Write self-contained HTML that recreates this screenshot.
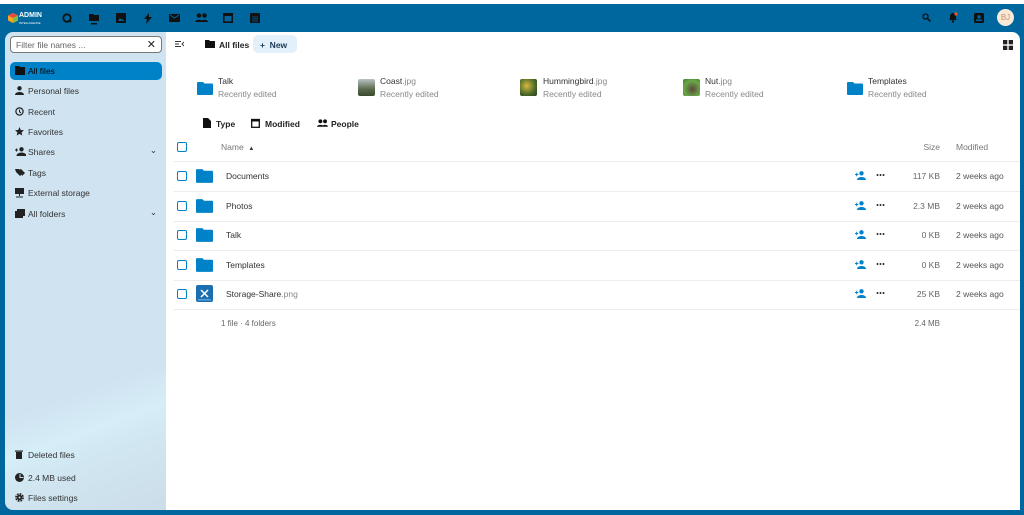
<!DOCTYPE html>
<html><head><meta charset="utf-8"><style>
*{box-sizing:border-box;margin:0;padding:0}
html,body{overflow:hidden}
body{width:1024px;height:515px;background:#00679e;font-family:"Liberation Sans",sans-serif;font-size:9px;color:#222;position:relative}
.top{position:absolute;left:0;top:0;width:1024px;height:4px;background:#fff}
.hdr{position:absolute;top:4px;left:0;width:1024px;height:28px;background:#00679e}
.side{position:absolute;left:5px;top:32px;width:161px;height:478px;border-radius:8px 0 0 8px;background:linear-gradient(160deg,#cfe3f0 0%,#cfe3f0 72%,#d6eef8 80%,#d0e6f1 86%,#cbdde8 100%)}
.main{position:absolute;left:166px;top:32px;width:854px;height:478px;background:#fff;border-radius:0 8px 0 0}
.abs{position:absolute}
.filter{position:absolute;left:5px;top:4px;width:152px;height:17px;background:#fff;border:1px solid #777;border-radius:4px;color:#666;font-size:8.5px;padding:3px 5px}
.nav{position:absolute;left:5px;width:152px;height:18px;border-radius:5px;font-size:8.5px;color:#333;padding:4px 0 0 18px}
.nav.act{background:#0082c9;color:#000}
.nav i{position:absolute;left:5px;top:4px;width:9px;height:9px}
.row{position:absolute;left:8px;width:846px;height:30px;border-bottom:1px solid #ededed;font-size:8.5px;color:#333}
.cb{position:absolute;left:3px;top:9px;width:10px;height:10px;border:1.5px solid #0082c9;border-radius:2px;background:#fff}
.fold{position:absolute;left:22px;top:7px}
.nm{position:absolute;left:52px;top:9px}
.sz{position:absolute;right:80px;top:9px;color:#666}
.md{position:absolute;left:782px;top:9px;color:#555}
.sh{position:absolute;left:681px;top:9px}
.dots{position:absolute;left:702px;top:12px;width:9px;height:2px;background:radial-gradient(circle,#333 0.9px,transparent 1.1px) 0 0/3px 2px repeat-x}
.rec{position:absolute;top:44px;font-size:8.5px;color:#333}
.rec .s{color:#888;margin-top:3px}
.g{color:#888}
</style></head><body>
<div class="top"></div>
<div class="hdr">
 <svg class="abs" style="left:8px;top:9px" width="10" height="10" viewBox="0 0 10 10"><polygon points="5,0 10,2.5 10,7.5 5,10 0,7.5 0,2.5" fill="#f5a623"/><polygon points="5,0 10,2.5 5,5 0,2.5" fill="#e94e3c"/><polygon points="5,5 10,2.5 10,7.5 5,10" fill="#7ac143"/></svg>
 <div class="abs" style="left:19px;top:8px;color:#fff;font-weight:bold;font-size:7px;line-height:7px">ADMIN<br><span style="font-size:3px;font-weight:normal">INTELLIGENCE</span></div>
 <svg class="abs" style="left:62px;top:9px" width="10" height="10" viewBox="0 0 10 10"><circle cx="5" cy="5" r="3.7" fill="none" stroke="#111" stroke-width="1.8"/><path d="M7 7l2 2" stroke="#111" stroke-width="1.8"/></svg>
 <svg class="abs" style="left:89px;top:9px" width="10" height="12" viewBox="0 0 10 12"><path d="M0 1h4l1 1h5v6H0z" fill="#111"/><rect x="2" y="10" width="6" height="1.5" fill="#111"/></svg>
 <svg class="abs" style="left:116px;top:9px" width="10" height="10" viewBox="0 0 10 10"><rect width="10" height="10" rx="1" fill="#111"/><path d="M2 8l2-3 2 2 1-1 1 2z" fill="#00679e"/></svg>
 <svg class="abs" style="left:144px;top:9px" width="8" height="11" viewBox="0 0 8 11"><path d="M5 0L0 6h3l-1 5 6-7H5z" fill="#111"/></svg>
 <svg class="abs" style="left:169px;top:10px" width="11" height="8" viewBox="0 0 11 8"><rect width="11" height="8" rx="1" fill="#111"/><path d="M1 1l4.5 3L10 1" stroke="#00679e" fill="none"/></svg>
 <svg class="abs" style="left:195px;top:9px" width="13" height="9" viewBox="0 0 13 9"><circle cx="4" cy="2.5" r="2.3" fill="#111"/><circle cx="9.5" cy="2.5" r="2.3" fill="#111"/><path d="M0 9c0-3 8-3 8 0zM6 9c0-3 7-3 7 0z" fill="#111"/></svg>
 <svg class="abs" style="left:223px;top:8px" width="10" height="11" viewBox="0 0 10 11"><rect x="0.8" y="1.8" width="8.4" height="8.4" fill="none" stroke="#111" stroke-width="1.6"/><rect x="0" y="1" width="10" height="3" fill="#111"/></svg>
 <svg class="abs" style="left:250px;top:8px" width="10" height="11" viewBox="0 0 10 11"><rect x="0" y="1" width="10" height="10" rx="1" fill="#111"/><path d="M2 5h6M2 7h6M2 9h6" stroke="#00679e" stroke-width="0.8"/></svg>
 <svg class="abs" style="left:922px;top:9px" width="9" height="9" viewBox="0 0 9 9"><circle cx="3.5" cy="3.5" r="2.5" fill="none" stroke="#111" stroke-width="1.3"/><path d="M5.5 5.5L8.5 8.5" stroke="#111" stroke-width="1.5"/></svg>
 <svg class="abs" style="left:948px;top:8px" width="10" height="11" viewBox="0 0 10 11"><path d="M1 8h8L8 7V4a3 3 0 0 0-6 0v3z" fill="#111"/><circle cx="5" cy="9.5" r="1.2" fill="#111"/><circle cx="8" cy="2" r="1.6" fill="#e9562a"/></svg>
 <svg class="abs" style="left:974px;top:9px" width="10" height="10" viewBox="0 0 10 10"><rect width="10" height="10" rx="1.5" fill="#111"/><circle cx="5" cy="4" r="1.7" fill="#00679e"/><rect x="2" y="6.5" width="6" height="1.5" fill="#00679e"/></svg>
 <div class="abs" style="left:997px;top:5px;width:17px;height:17px;border-radius:50%;background:#fbe9d8;color:#c8906a;font-size:8px;text-align:center;line-height:17px">BJ</div>
</div>
<div class="side">
 <div class="filter">Filter file names ...<span style="position:absolute;right:5px;top:1px;font-size:11px;color:#222">✕</span></div>
 <div class="nav act" style="top:30px"><i><svg width="10" height="9" viewBox="0 0 10 9"><path d="M0 0h4l1 1h5v8H0z" fill="#111"/></svg></i>All files</div>
 <div class="nav" style="top:50px"><i><svg width="9" height="9" viewBox="0 0 9 9"><circle cx="4.5" cy="2.3" r="2.2" fill="#222"/><path d="M0 9c0-4 9-4 9 0z" fill="#222"/></svg></i>Personal files</div>
 <div class="nav" style="top:71px"><i><svg width="9" height="9" viewBox="0 0 9 9"><circle cx="4.5" cy="4.5" r="3.6" fill="none" stroke="#222" stroke-width="1.2"/><path d="M4.5 2.5v2.3l1.5 1" stroke="#222" fill="none"/></svg></i>Recent</div>
 <div class="nav" style="top:91px"><i><svg width="9" height="9" viewBox="0 0 10 10"><path d="M5 0l1.4 3.3 3.6.3-2.7 2.4.8 3.5L5 7.7 1.9 9.5l.8-3.5L0 3.6l3.6-.3z" fill="#222"/></svg></i>Favorites</div>
 <div class="nav" style="top:111px"><i><svg width="11" height="9" viewBox="0 0 11 9"><circle cx="6.5" cy="2.3" r="2.2" fill="#222"/><path d="M2 9c0-4 9-4 9 0zM0 3h3M1.5 1.5v3" fill="#222" stroke="#222"/></svg></i>Shares<span style="position:absolute;right:5px;top:2px">⌄</span></div>
 <div class="nav" style="top:132px"><i><svg width="10" height="9" viewBox="0 0 10 9"><path d="M0 1h4l4 4-3 3-4-4zM5 1h1l4 4-3 3" fill="#222"/></svg></i>Tags</div>
 <div class="nav" style="top:152px"><i><svg width="9" height="10" viewBox="0 0 9 10"><rect width="9" height="6" fill="#222"/><path d="M4.5 6v2M1 9h7" stroke="#222"/></svg></i>External storage</div>
 <div class="nav" style="top:173px"><i><svg width="10" height="9" viewBox="0 0 10 9"><rect x="0" y="2" width="8" height="7" fill="#222"/><rect x="2" y="0" width="8" height="7" fill="#222"/></svg></i>All folders<span style="position:absolute;right:5px;top:2px">⌄</span></div>
 <div class="nav" style="top:414px"><i><svg width="8" height="9" viewBox="0 0 8 9"><rect x="1" y="2" width="6" height="7" fill="#222"/><rect x="0" y="0.5" width="8" height="1.2" fill="#222"/></svg></i>Deleted files</div>
 <div class="nav" style="top:437px"><i><svg width="9" height="9" viewBox="0 0 9 9"><circle cx="4.5" cy="4.5" r="4.5" fill="#222"/><path d="M5 1v3.5h3.5" stroke="#cbdde8" fill="none"/></svg></i>2.4 MB used</div>
 <div class="nav" style="top:457px"><i><svg width="9" height="9" viewBox="0 0 9 9"><circle cx="4.5" cy="4.5" r="3.3" fill="none" stroke="#222" stroke-width="2.2" stroke-dasharray="1.6 1"/><circle cx="4.5" cy="4.5" r="2.6" fill="#222"/><circle cx="4.5" cy="4.5" r="1" fill="#cbdde8"/></svg></i>Files settings</div>
</div>
<div class="main">
 <svg class="abs" style="left:9px;top:9px" width="9" height="6" viewBox="0 0 9 6"><path d="M0 .5h6M0 3h4M0 5.5h6M9 1L7 3l2 2" stroke="#333" fill="none" stroke-width=".9"/></svg>
 <svg class="abs" style="left:39px;top:8px" width="10" height="8" viewBox="0 0 10 8"><path d="M0 0h4l1 1h5v7H0z" fill="#111"/></svg>
 <div class="abs" style="left:53px;top:8px;font-weight:bold;font-size:8.5px">All files</div>
 <div class="abs" style="left:87px;top:3px;width:44px;height:18px;background:#e3f0f9;border-radius:5px;font-weight:bold;font-size:8.5px;color:#1a3a55;padding:5px 0 0 7px">+&nbsp; New</div>
 <svg class="abs" style="left:837px;top:8px" width="10" height="10" viewBox="0 0 10 10"><rect width="4.3" height="4.3" fill="#222"/><rect x="5.7" width="4.3" height="4.3" fill="#222"/><rect y="5.7" width="4.3" height="4.3" fill="#222"/><rect x="5.7" y="5.7" width="4.3" height="4.3" fill="#222"/></svg>

 <svg class="abs" style="left:31px;top:50px" width="16" height="13" viewBox="0 0 16 13"><path d="M0 1a1 1 0 0 1 1-1h5l1.5 1.5H15a1 1 0 0 1 1 1V12a1 1 0 0 1-1 1H1a1 1 0 0 1-1-1z" fill="#0082c9"/></svg>
 <div class="rec" style="left:52px">Talk<div class="s">Recently edited</div></div>
 <div class="abs" style="left:192px;top:47px;width:17px;height:17px;border-radius:2px;background:linear-gradient(#b8c2c6,#5a6a4c 60%,#3a4a30)"></div>
 <div class="rec" style="left:214px">Coast<span class="g">.jpg</span><div class="s">Recently edited</div></div>
 <div class="abs" style="left:354px;top:47px;width:17px;height:17px;border-radius:2px;background:radial-gradient(circle at 40% 40%,#d8b840,#4a6a28 60%,#2a3a18)"></div>
 <div class="rec" style="left:377px">Hummingbird<span class="g">.jpg</span><div class="s">Recently edited</div></div>
 <div class="abs" style="left:517px;top:47px;width:17px;height:17px;border-radius:2px;background:radial-gradient(circle at 55% 60%,#5a4a3a,#6aa848 60%,#3a7a28)"></div>
 <div class="rec" style="left:539px">Nut<span class="g">.jpg</span><div class="s">Recently edited</div></div>
 <svg class="abs" style="left:681px;top:50px" width="16" height="13" viewBox="0 0 16 13"><path d="M0 1a1 1 0 0 1 1-1h5l1.5 1.5H15a1 1 0 0 1 1 1V12a1 1 0 0 1-1 1H1a1 1 0 0 1-1-1z" fill="#0082c9"/></svg>
 <div class="rec" style="left:702px">Templates<div class="s">Recently edited</div></div>

 <svg class="abs" style="left:37px;top:86px" width="8" height="10" viewBox="0 0 8 10"><path d="M0 0h5l3 3v7H0z" fill="#111"/></svg>
 <div class="abs" style="left:50px;top:87px;font-weight:bold;font-size:8.5px">Type</div>
 <svg class="abs" style="left:85px;top:86px" width="9" height="10" viewBox="0 0 9 10"><rect x=".7" y="1.5" width="7.6" height="7.8" fill="none" stroke="#111" stroke-width="1.3"/><rect y="1" width="9" height="2.5" fill="#111"/></svg>
 <div class="abs" style="left:99px;top:87px;font-weight:bold;font-size:8.5px">Modified</div>
 <svg class="abs" style="left:151px;top:87px" width="11" height="8" viewBox="0 0 13 9"><circle cx="4" cy="2.5" r="2.3" fill="#111"/><circle cx="9.5" cy="2.5" r="2.3" fill="#111"/><path d="M0 9c0-3 8-3 8 0zM6 9c0-3 7-3 7 0z" fill="#111"/></svg>
 <div class="abs" style="left:165px;top:87px;font-weight:bold;font-size:8.5px">People</div>

 <div class="row" style="top:100px;height:30px"><div class="cb" style="top:10px"></div><div class="nm" style="left:47px;top:10px;color:#777">Name &nbsp;<span style="font-size:6px;color:#333">▲</span></div><div class="sz" style="top:10px;color:#777">Size</div><div class="md" style="top:10px;color:#777">Modified</div></div>
 <div class="row" style="top:130px"><div class="cb"></div><svg class="fold" width="17" height="14" viewBox="0 0 16 13"><path d="M0 1a1 1 0 0 1 1-1h5l1.5 1.5H15a1 1 0 0 1 1 1V12a1 1 0 0 1-1 1H1a1 1 0 0 1-1-1z" fill="#0082c9"/></svg><div class="nm">Documents</div><svg class="sh" width="11" height="9" viewBox="0 0 11 9"><circle cx="6.5" cy="2.3" r="2.2" fill="#0082c9"/><path d="M2 9c0-4 9-4 9 0z" fill="#0082c9"/><path d="M0 3.5h3.4M1.7 1.8v3.4" stroke="#0082c9"/></svg><div class="dots"></div><div class="sz">117 KB</div><div class="md">2 weeks ago</div></div>
 <div class="row" style="top:160px"><div class="cb"></div><svg class="fold" width="17" height="14" viewBox="0 0 16 13"><path d="M0 1a1 1 0 0 1 1-1h5l1.5 1.5H15a1 1 0 0 1 1 1V12a1 1 0 0 1-1 1H1a1 1 0 0 1-1-1z" fill="#0082c9"/></svg><div class="nm">Photos</div><svg class="sh" width="11" height="9" viewBox="0 0 11 9"><circle cx="6.5" cy="2.3" r="2.2" fill="#0082c9"/><path d="M2 9c0-4 9-4 9 0z" fill="#0082c9"/><path d="M0 3.5h3.4M1.7 1.8v3.4" stroke="#0082c9"/></svg><div class="dots"></div><div class="sz">2.3 MB</div><div class="md">2 weeks ago</div></div>
 <div class="row" style="top:189px"><div class="cb"></div><svg class="fold" width="17" height="14" viewBox="0 0 16 13"><path d="M0 1a1 1 0 0 1 1-1h5l1.5 1.5H15a1 1 0 0 1 1 1V12a1 1 0 0 1-1 1H1a1 1 0 0 1-1-1z" fill="#0082c9"/></svg><div class="nm">Talk</div><svg class="sh" width="11" height="9" viewBox="0 0 11 9"><circle cx="6.5" cy="2.3" r="2.2" fill="#0082c9"/><path d="M2 9c0-4 9-4 9 0z" fill="#0082c9"/><path d="M0 3.5h3.4M1.7 1.8v3.4" stroke="#0082c9"/></svg><div class="dots"></div><div class="sz">0 KB</div><div class="md">2 weeks ago</div></div>
 <div class="row" style="top:219px"><div class="cb"></div><svg class="fold" width="17" height="14" viewBox="0 0 16 13"><path d="M0 1a1 1 0 0 1 1-1h5l1.5 1.5H15a1 1 0 0 1 1 1V12a1 1 0 0 1-1 1H1a1 1 0 0 1-1-1z" fill="#0082c9"/></svg><div class="nm">Templates</div><svg class="sh" width="11" height="9" viewBox="0 0 11 9"><circle cx="6.5" cy="2.3" r="2.2" fill="#0082c9"/><path d="M2 9c0-4 9-4 9 0z" fill="#0082c9"/><path d="M0 3.5h3.4M1.7 1.8v3.4" stroke="#0082c9"/></svg><div class="dots"></div><div class="sz">0 KB</div><div class="md">2 weeks ago</div></div>
 <div class="row" style="top:248px"><div class="cb"></div><svg class="fold" style="top:5px" width="17" height="17" viewBox="0 0 17 17"><rect width="17" height="17" rx="2" fill="#1b6fb0"/><path d="M5 5l7 7M12 5l-7 7" stroke="#fff" stroke-width="1.5"/><rect x="2" y="14" width="13" height="1.5" fill="#5aa0d8"/></svg><div class="nm">Storage-Share<span class="g">.png</span></div><svg class="sh" width="11" height="9" viewBox="0 0 11 9"><circle cx="6.5" cy="2.3" r="2.2" fill="#0082c9"/><path d="M2 9c0-4 9-4 9 0z" fill="#0082c9"/><path d="M0 3.5h3.4M1.7 1.8v3.4" stroke="#0082c9"/></svg><div class="dots"></div><div class="sz">25 KB</div><div class="md">2 weeks ago</div></div>
 <div class="row" style="top:278px;border:none;color:#666"><div class="nm" style="left:47px;font-size:8px">1 file · 4 folders</div><div class="sz" style="font-size:8px">2.4 MB</div></div>
</div>
</body></html>
